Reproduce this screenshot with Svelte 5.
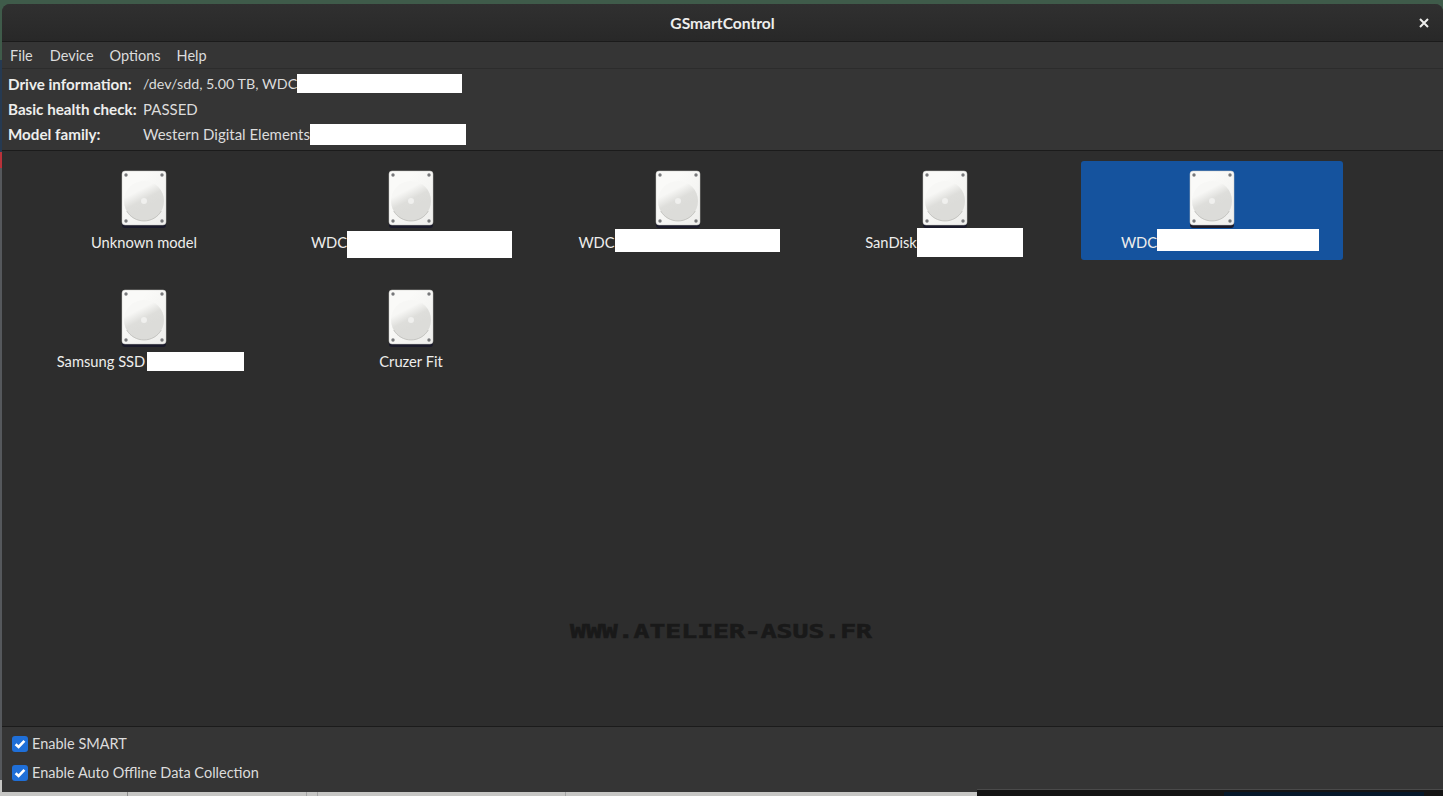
<script>
	const devices = [
		{ name: 'Unknown model' },
		{ name: 'WDC', mask: 165, h: 27, top: 2.5, shift: 1 },
		{ name: 'WDC', mask: 165, h: 23, top: -1.5, shift: 2 },
		{ name: 'SanDisk', mask: 106, h: 29, top: 0.5, shift: -2 },
		{ name: 'WDC', mask: 162, h: 22, top: -2, shift: 16, selected: true },
		{ name: 'Samsung SSD', mask: 97, h: 19, top: 0, gap: 2, shift: 13 },
		{ name: 'Cruzer Fit' }
	];
</script>

{#snippet disk()}
	<svg class="disk" width="48" height="58" viewBox="0 0 48 58">
		<defs>
			<linearGradient id="plate" x1="0" y1="0" x2="1" y2="1">
				<stop offset="0.3" stop-color="#fafaf8" />
				<stop offset="1" stop-color="#eeeeec" />
			</linearGradient>
			<linearGradient id="platter" x1="0.3" y1="0" x2="0.62" y2="0.62">
				<stop offset="0.35" stop-color="#f7f7f5" />
				<stop offset="0.72" stop-color="#dededb" />
				<stop offset="1" stop-color="#dcdcd9" />
			</linearGradient>
		</defs>
		<rect x="2" y="8" width="44" height="50" rx="3" fill="#1a1a2a" />
		<rect x="2" y="1" width="44" height="54" rx="3" fill="url(#plate)" stroke="#c8c8c4" stroke-width="0.5" />
		<circle cx="24" cy="31" r="20" fill="url(#platter)" />
		<path d="M6.7 41 A20 20 0 0 0 41.3 41" fill="none" stroke="#bdbdb9" stroke-width="0.8" />
		<circle cx="24" cy="31" r="3" fill="#f0f0ee" />
		<circle cx="6" cy="5" r="1.7" fill="#77787a" />
		<circle cx="42" cy="5" r="1.7" fill="#77787a" />
		<circle cx="6" cy="51" r="1.7" fill="#77787a" />
		<circle cx="42" cy="51" r="1.7" fill="#77787a" />
	</svg>
{/snippet}

{#snippet check(label)}
	<label class="check">
		<span class="box">
			<svg width="14" height="14" viewBox="0 0 14 14">
				<path d="M2.6 7.2 L5.6 10 L11.4 3.8" fill="none" stroke="#fff" stroke-width="2.6" />
			</svg>
		</span>
		{label}
	</label>
{/snippet}

<div class="desktop">
	<div class="window">
		<header class="titlebar">
			<span class="title">GSmartControl</span>
			<svg class="close" width="10" height="10" viewBox="0 0 10 10">
				<path d="M1 1 L9 9 M9 1 L1 9" stroke="#eeeeec" stroke-width="2" />
			</svg>
		</header>

		<nav class="menubar">
			<span class="first">File</span>
			<span>Device</span>
			<span>Options</span>
			<span>Help</span>
		</nav>

		<section class="info">
			<div class="row">
				<b>Drive information:</b>
				<span class="value narrow">/dev/sdd, 5.00 TB, WDC</span>
				<span class="mask" style="width: 165px; height: 19px"></span>
			</div>
			<div class="row">
				<b>Basic health check:</b>
				<span class="value">PASSED</span>
			</div>
			<div class="row">
				<b>Model family:</b>
				<span class="value">Western Digital Elements</span>
				<span class="mask" style="width: 156px; height: 21px; margin-top: 2px"></span>
			</div>
		</section>

		<main class="drives">
			{#each devices as d}
				<div class="drive" class:selected={d.selected}>
					{@render disk()}
					<div class="name" style="margin-left: {d.shift || 0}px">
						<span>{d.name}</span>
						{#if d.mask}
							<span class="mask offset" style="width: {d.mask}px; height: {d.h}px; margin-left: {d.gap || 0}px; top: {d.top}px"></span>
						{/if}
					</div>
				</div>
			{/each}
			<div class="watermark">WWW.ATELIER-ASUS.FR</div>
		</main>

		<footer class="options">
			{@render check('Enable SMART')}
			{@render check('Enable Auto Offline Data Collection')}
		</footer>
	</div>
	<div class="strip strip-dark"></div>
	<div class="strip strip-blue"></div>
</div>

<style>
	:global(body) {
		margin: 0;
		background: #cfcfcf;
		overflow: hidden;
	}

	.desktop {
		position: relative;
		width: 1443px;
		height: 796px;
		box-sizing: border-box;
		padding: 4px 0 4px 2px;
		background:
			linear-gradient(90deg, transparent 127px, #8e8e8e 127px 128px, transparent 128px 306px, #a5a5a5 306px 307px, transparent 307px 317px, #a5a5a5 317px 318px, transparent 318px 565px, #a5a5a5 565px 566px, transparent 566px) left bottom / 100% 4px no-repeat,
			linear-gradient(#3f5b4a 0 60px, #263a52 60px 152px, #b8323a 152px 168px, #55585c 168px 780px, #c6c6c4 780px);
		font-family: Lato, 'Noto Sans', sans-serif;
		font-size: 14.5px;
		color: #eeeeec;
	}

	.window {
		position: relative;
		height: 100%;
		display: flex;
		flex-direction: column;
		background: #353535;
		border-radius: 8px 8px 0 0;
		overflow: hidden;
	}

	.strip {
		position: absolute;
		bottom: 0;
	}

	.strip-dark {
		left: 977px;
		right: 0;
		height: 7px;
		background: #141414;
		border-top: 1px solid #4a4a4a;
		box-sizing: border-box;
	}

	.strip-blue {
		left: 1224px;
		width: 200px;
		height: 4px;
		background: #06182a;
	}

	.titlebar {
		position: relative;
		height: 37px;
		flex: none;
		display: flex;
		align-items: center;
		justify-content: center;
		background: linear-gradient(#303030, #282828);
		border-bottom: 1px solid #1b1b1b;
	}

	.title {
		font-weight: 700;
		font-size: 15.6px;
		padding-top: 1px;
	}

	.close {
		position: absolute;
		right: 14px;
		top: 14px;
	}

	.menubar {
		height: 26px;
		flex: none;
		display: flex;
		align-items: center;
		gap: 16px;
		padding-left: 8px;
		border-bottom: 1px solid #2c2c2c;
		color: #dcdcdc;
	}

	.menubar .first {
		margin-right: 1px;
	}

	.info {
		height: 81px;
		box-sizing: border-box;
		flex: none;
		display: flex;
		flex-direction: column;
		justify-content: center;
		padding: 0 0 2px 6px;
	}

	.row {
		height: 25px;
		display: flex;
		align-items: center;
	}

	.row b {
		width: 135px;
		font-weight: 700;
		font-size: 15.2px;
		white-space: nowrap;
	}

	.value {
		color: #dcdcdc;
		font-size: 15px;
	}

	.value.narrow {
		font-size: 14.3px;
	}

	.mask {
		display: block;
		flex: none;
		background: #fff;
	}

	.mask.offset {
		position: relative;
	}

	.drives {
		position: relative;
		flex: 1;
		display: grid;
		grid-template-columns: repeat(5, 262px);
		grid-auto-rows: 119px;
		column-gap: 5px;
		align-content: start;
		padding: 10px 0 0 11px;
		background: #2d2d2d;
		border-top: 1px solid #1b1b1b;
		border-bottom: 1px solid #1b1b1b;
	}

	.drive {
		height: 99px;
		display: flex;
		flex-direction: column;
		align-items: center;
		padding-top: 9px;
		box-sizing: border-box;
		border-radius: 3px;
	}

	.drive.selected {
		background: #15539e;
	}

	.disk {
		flex: none;
	}

	.name {
		display: flex;
		align-items: center;
		white-space: nowrap;
		height: 20px;
		margin-top: 4px;
		font-size: 14.7px;
	}

	.watermark {
		position: absolute;
		left: 568px;
		top: 468px;
		font-family: 'DejaVu Sans Mono', monospace;
		font-weight: 700;
		font-size: 20px;
		-webkit-text-stroke: 0.6px #191919;
		transform: scaleX(1.32);
		transform-origin: left top;
		color: #191919;
		white-space: nowrap;
	}

	.options {
		height: 65px;
		box-sizing: border-box;
		flex: none;
		display: flex;
		flex-direction: column;
		justify-content: center;
		gap: 9px;
		padding: 0 0 3px 10px;
	}

	.check {
		display: flex;
		align-items: center;
		gap: 4px;
		height: 20px;
		color: #dcdcdc;
	}

	.box {
		width: 16px;
		height: 16px;
		display: flex;
		align-items: center;
		justify-content: center;
		border-radius: 3px;
		background: #1f6fd8;
	}
</style>
